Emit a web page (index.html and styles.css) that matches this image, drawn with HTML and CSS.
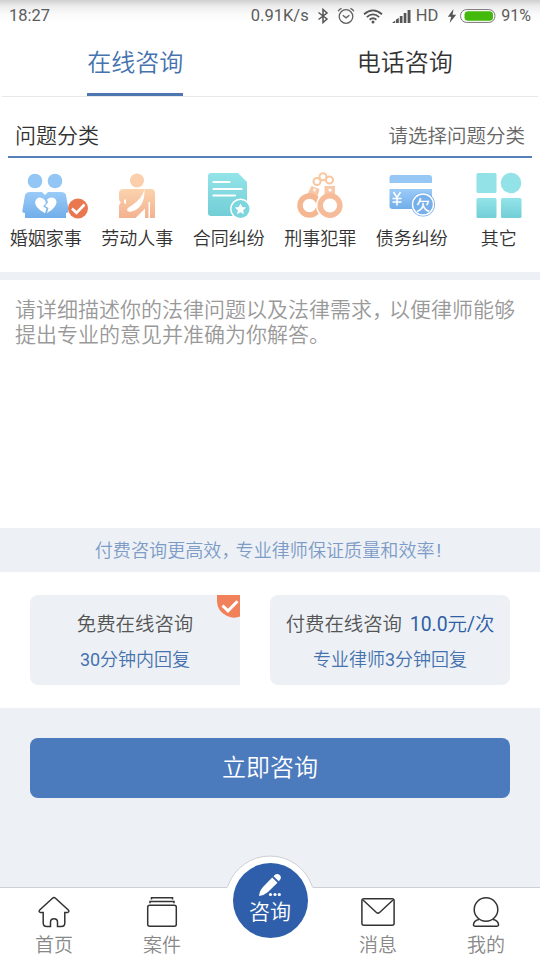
FILE: index.html
```
<!DOCTYPE html>
<html lang="zh-CN">
<head>
<meta charset="utf-8">
<title>在线咨询</title>
<link rel="stylesheet" href="styles.css">
</head>
<body>
<div class="app">
  <header class="status">
    <span class="clock">18:27</span>
    <span class="speed">0.91K/s</span>
    <svg class="bt" width="12" height="16" viewBox="0 0 12 16"><path d="M1.500 4.500 10 11 6 14.500V1.500L10 5 1.500 11.500" fill="none" stroke="#555" stroke-width="1.500"/></svg>
    <svg class="alarm" width="18" height="18" viewBox="0 0 18 18" fill="none" stroke="#606060" stroke-width="1.300"><circle cx="9" cy="9.500" r="6.800"/><path d="M5.800 8.200 9 10.800l3.400-2.600M1.200 4.200Q2.200 2 4.600 1.300M16.800 4.200Q15.800 2 13.400 1.300"/></svg>
    <svg class="wifi" width="20" height="15" viewBox="0 0 20 15" fill="none" stroke="#555" stroke-width="1.800"><path d="M1 5.300Q10-2.500 19 5.300M3.800 8.100Q10 2.700 16.200 8.100M6.600 10.700Q10 7.800 13.400 10.700"/><circle cx="10" cy="13" r="1.500" fill="#555" stroke="none"/></svg>
    <svg class="signal" width="19" height="13" viewBox="0 0 19 13" fill="#555"><path d="M0 13 3.200 10.500V13zM4 9.500 6.800 8v5H4zM7.800 6h2.700v7H7.800zM11.700 3h2.700v10h-2.700zM15.600 0h2.900v13h-2.900z"/></svg>
    <span class="hd">HD</span>
    <svg class="bolt" width="10" height="16" viewBox="0 0 10 16"><path d="M6.500 1 .8 8.700h3.400L2.600 15 9.200 6.700H5.600z" fill="#555"/></svg>
    <svg class="battery" width="36" height="14" viewBox="0 0 36 14"><rect x=".6" y=".6" width="34.300" height="12.800" rx="6" fill="#fff" stroke="#777" stroke-width="1"/><rect x="4.500" y="2.200" width="28.500" height="9.600" rx="3.500" fill="#42b90b"/></svg>
    <span class="percent">91%</span>
  </header>

  <nav class="tabs">
    <div class="tab tab-active"><span>在线咨询</span></div>
    <div class="tab"><span>电话咨询</span></div>
  </nav>

  <section class="category-head">
    <h2>问题分类</h2>
    <span class="choose">请选择问题分类</span>
  </section>

  <section class="categories">
    <div class="category">
      <svg width="86" height="48" viewBox="-3 0 86 48">
        <defs>
          <linearGradient id="blue" x1="0" y1="0" x2="0" y2="1"><stop offset="0" stop-color="#9bcbf7"/><stop offset="1" stop-color="#71aeea"/></linearGradient>
          <linearGradient id="orange" x1="0" y1="0" x2="0" y2="1"><stop offset="0" stop-color="#fbd3ad"/><stop offset="1" stop-color="#f4b190"/></linearGradient>
          <linearGradient id="teal" x1="0" y1="0" x2="0" y2="1"><stop offset="0" stop-color="#93e4e8"/><stop offset="1" stop-color="#72ced6"/></linearGradient>
        </defs>
        <g fill="#93c6f5"><circle cx="29" cy="9" r="7.300"/><circle cx="49" cy="9" r="7.300"/></g>
        <path d="M24 20h12l3 3 3-3h13q4 0 5 3l2.500 15q.3 3-2.500 3v5H19v-5q-3.500 0-2.500-3L19 23q1-3 5-3z" fill="url(#blue)"/>
        <path d="M39 28.200q-4-4.200-8-1.700-3.500 3-.5 8 3 4.200 8.500 6.700l1.500-4.700-3.500-2.200 3-3zM41 27.500q3.800-3.500 7.500-1.200 4 3.500.2 8.500-3 4.200-7.700 6.200l1.500-5-3.500-2 3-3.500z" fill="#fff"/>
        <circle cx="72" cy="36.500" r="10" fill="#e97750"/><path d="m66 36.500 4.500 4.300 8-8.300" fill="none" stroke="#fff" stroke-width="2.600"/>
      </svg>
      <span>婚姻家事</span>
    </div>
    <div class="category">
      <svg width="80" height="48" viewBox="0 0 80 48"><circle cx="40" cy="8.500" r="7" fill="#fbcfab"/><path d="M27 17h27q4 0 4 4v25H22V34q0-2 2-3.500-2-1.500-2-4V21q0-4 5-4z" fill="url(#orange)"/><path d="M47.500 17Q46 26 34 34q-4 2-4 4 .5 2.500 4.500 1.500Q48 36 47.500 17zM38.500 46l9.500-9.500V46zM27 27.500h2v5l-2-2zM51.500 30H53v16h-1.500z" fill="#fff"/></svg>
      <span>劳动人事</span>
    </div>
    <div class="category">
      <svg width="80" height="48" viewBox="0 0 80 48"><path d="M22 1h27l9 9v34H22q-3 0-3-3V4q0-3 3-3z" fill="url(#teal)"/><path d="M24.500 10h16M24.500 17h28M24.500 23.500H46" stroke="#fff" stroke-width="2.200" stroke-linecap="round"/><circle cx="51.500" cy="37" r="10.500" fill="#fff"/><circle cx="51.500" cy="37" r="9" fill="#7dd6dd"/><path d="m51.500 31.500 1.700 3.600 3.900.5-2.900 2.700.7 3.900-3.400-1.900-3.400 1.900.7-3.900-2.900-2.700 3.900-.5z" fill="#fff"/></svg>
      <span>合同纠纷</span>
    </div>
    <div class="category">
      <svg width="80" height="48" viewBox="0 0 80 48"><g fill="none" stroke="#f8c7a0" stroke-width="2"><circle cx="37" cy="9.500" r="3.500"/><circle cx="43" cy="4.800" r="3.500"/><circle cx="49.500" cy="8" r="3.500"/></g><path d="m31.500 14 8 3-2 8-10-3z" fill="#f8c7a5"/><circle cx="29.500" cy="33.500" r="9.500" fill="none" stroke="#f5b692" stroke-width="5.500"/><circle cx="50" cy="33.500" r="14" fill="#fff"/><path d="M44.500 14h10.500v9H44.500z" fill="#f8c9a9"/><circle cx="50" cy="33.500" r="9.800" fill="#fff" stroke="#f6bb98" stroke-width="5.500"/><circle cx="34.500" cy="18" r="1.400" fill="#fff"/><circle cx="50" cy="18" r="1.600" fill="#fff"/></svg>
      <span>刑事犯罪</span>
    </div>
    <div class="category">
      <svg width="80" height="48" viewBox="0 0 80 48"><path d="M20 3h37q3 0 3 3v5H17.500V6q0-3 2.500-3z" fill="#96c7f5"/><path d="M17.500 17H60v20H20.500q-3 0-3-3z" fill="url(#blue)"/><path d="m21.500 20 3.500 5.500 3.500-5.500M20.500 26.500h9M20.500 30h9M25 25.500v8" stroke="#fff" stroke-width="1.600" fill="none"/><circle cx="51" cy="32.500" r="12" fill="#76afe9"/><circle cx="51" cy="32.500" r="10.500" fill="none" stroke="#fff" stroke-width="1.400"/><text x="51" y="37.500" text-anchor="middle" class="owe">欠</text></svg>
      <span>债务纠纷</span>
    </div>
    <div class="category">
      <svg width="80" height="48" viewBox="0 0 80 48"><g fill="url(#teal)"><rect x="17.500" y="1" width="20" height="20" rx="1.500" fill="#92e2e7"/><circle cx="52" cy="11" r="10.300" fill="#92e2e7"/><rect x="17.500" y="26" width="20" height="20" rx="1.500"/><rect x="42" y="26" width="20.500" height="20" rx="1.500"/></g></svg>
      <span>其它</span>
    </div>
  </section>

  <section class="question">请详细描述你的法律问题以及法律需求<i class="comma">，</i>以便律师能够<br>提出专业的意见并准确为你解答。</section>

  <p class="notice">付费咨询更高效<i class="comma">，</i>专业律师保证质量和效率<i class="bang">!</i></p>

  <section class="plans">
    <div class="plan plan-selected">
      <p class="plan-name">免费在线咨询</p>
      <p class="plan-time"><span class="num">30</span>分钟内回复</p>
      <svg class="plan-check" width="23" height="23" viewBox="0 0 23 23"><path d="M0 0h23v21.500Q17 24 10 21 0 16 0 6z" fill="#f0815a"/><path d="m5.500 10.500 5.500 5.300 9.500-9.500" fill="none" stroke="#fff" stroke-width="3"/></svg>
    </div>
    <div class="plan">
      <p class="plan-name">付费在线咨询 <b><span class="num">10.0</span>元<span class="num">/</span>次</b></p>
      <p class="plan-time">专业律师<span class="num">3</span>分钟回复</p>
    </div>
  </section>

  <section class="action"><button class="submit">立即咨询</button></section>

  <nav class="bottom">
    <div class="item">
      <svg width="34" height="34" viewBox="0 0 34 34"><path d="M15.500 3.200q1.500-1.400 3 0L31.300 15q1.500 2-.8 2.500h-2.700V28q0 3.500-3.500 3.500h-3.800V27q0-3.300-3.500-3.300T13.500 27v4.500H9.700Q6.200 31.500 6.200 28V17.500H3.500q-2.300-.5-.8-2.500z"/></svg>
      <span>首页</span>
    </div>
    <div class="item">
      <svg width="34" height="34" viewBox="0 0 34 34"><rect x="2.700" y="10.200" width="28.600" height="21" rx="2"/><path d="M5 8.200V6.500h24v1.700M6.500 4.500V2.700h21v1.800"/></svg>
      <span>案件</span>
    </div>
    <div class="item item-main">
      <svg class="bump" width="96" height="34" viewBox="0 0 96 34"><path d="M3.500 34q2-1 2.800-4A44.500 44.500 0 0 1 89.700 30q.8 3 2.800 4z" fill="#fff"/><path d="M4.500 32.800q1.200-.8 1.800-2.800A44.500 44.500 0 0 1 89.700 30q.6 2 1.800 2.800" fill="none" stroke="#ccd0d3" stroke-width="1"/></svg>
      <div class="disc">
        <svg width="24" height="24" viewBox="0 0 24 24" fill="#fff"><path d="M1 23q.5-5.500 4-9L14.200 4.500l5.300 5.300L10 19q-4 3.500-9 4zM15.500 3.300l1.200-1.200Q19-.2 21.700 2q2.300 2.500.2 4.900l-1.200 1.300z"/><circle cx="12.500" cy="21.500" r="1.600"/><circle cx="17" cy="21.500" r="1.600"/><circle cx="21.300" cy="21.500" r="1.600"/></svg>
        <span>咨询</span>
      </div>
    </div>
    <div class="item">
      <svg width="34" height="34" viewBox="0 0 34 34"><rect x=".9" y="3.700" width="32.200" height="26.600" rx="2"/><path d="m2 5 13.700 12.700q1.300 1 2.600 0L32 5"/></svg>
      <span>消息</span>
    </div>
    <div class="item">
      <svg width="34" height="34" viewBox="0 0 34 34"><circle cx="17" cy="14.500" r="11.800"/><path d="M10 24.500q-5 1-5.500 4.800-.2 2 1.800 2h21.400q2 0 1.800-2Q29 25.500 24 24.500"/></svg>
      <span>我的</span>
    </div>
  </nav>
</div>
</body>
</html>
```
FILE: styles.css
```
* { box-sizing: border-box; margin: 0; padding: 0; }
body {
  width: 540px; height: 960px; overflow: hidden; background: #fff; color: #333;
  font-family: Roboto, "Noto Sans CJK SC", sans-serif; font-weight: 350;
}
i, b { font-style: normal; font-weight: inherit; }
svg { display: block; flex: none; }
.num { font-weight: 400; }
.app { display: flex; flex-direction: column; height: 960px; }
.app > * { flex-shrink: 0; }

.status {
  display: flex; align-items: center; height: 32px; padding: 0 9px;
  background: linear-gradient(#cfcfcf 0, #ececec 6px, #fafafa 14px, #fff 22px);
  color: #5c5c5c; font-size: 16.500px; font-weight: 400; line-height: 32px; white-space: nowrap;
}
.speed { margin-left: auto; }
.bt { margin-left: 8px; }
.alarm { margin-left: 8px; }
.wifi { margin-left: 8px; }
.signal { margin-left: 9px; }
.hd { margin-left: 5px; }
.bolt { margin-left: 9px; }
.battery { margin-left: 3px; }
.percent { margin-left: 5px; font-size: 16px; }

.tabs { display: flex; height: 65px; margin: 0 2px; border-bottom: 1px solid #e8e8e8; }
.tab { flex: 1; display: flex; justify-content: center; font-size: 24px; line-height: 62px; }
.tab span { height: 64px; }
.tab-active { color: #4672ae; padding-right: 3px; }
.tab-active span { border-bottom: 3px solid #4e76b0; }

.category-head {
  display: flex; justify-content: space-between; align-items: center;
  height: 61px; margin: 0 8px; padding: 15px 7px 0; border-bottom: 2px solid #5580b9;
}
.category-head h2 { font-size: 21px; font-weight: inherit; }
.choose { font-size: 19.500px; color: #666; }

.categories { display: flex; height: 114px; padding-top: 14px; }
.category { width: 91.500px; display: flex; flex-direction: column; align-items: center; font-size: 18px; line-height: 30px; }
.category:last-child { flex: 1; }
.category span { margin-top: 4px; }
.owe { font-size: 14px; font-weight: 500; fill: #fff; }

.question { height: 256px; border-top: 8px solid #edf1f5; padding: 18px 15px; font-size: 21px; line-height: 25px; color: #999; white-space: nowrap; }
.comma { letter-spacing: -4px; }
.notice { height: 44px; background: #edf1f5; color: #7d9bc7; text-align: center; font-size: 18.100px; line-height: 46px; padding-right: 4px; }
.bang { margin-left: 2px; font-weight: 400; }

.plans { display: flex; gap: 30px; height: 136px; padding: 23px 30px; }
.plan { position: relative; flex: 1; height: 90px; border-radius: 8px; background: #edf1f5; text-align: center; padding-top: 12px; }
.plan-selected { flex: 0 0 210px; border-radius: 8px 0 0 8px; }
.plan-name { font-size: 19.400px; line-height: 36px; color: #555; }
.plan-name b { color: #2f5fa5; margin-left: 3px; }
.plan-time { font-size: 18px; line-height: 34px; color: #4672ae; }
.plan-check { position: absolute; top: 0; right: 0; }

.action { height: 179px; background: #edf1f5; padding: 30px; }
.submit { display: block; width: 100%; height: 60px; border: 0; border-radius: 8px; background: #4b7abd; color: #fff; font: inherit; font-size: 24px; line-height: 60px; }

.bottom { display: flex; height: 73px; border-top: 1px solid #ced1d4; }
.item { position: relative; flex: 1; display: flex; flex-direction: column; align-items: center; padding-top: 7px; font-size: 19px; line-height: 28px; color: #888; }
.item > svg:not(.bump) { fill: none; stroke: #333; stroke-width: 1.500; }
.item span { margin-top: 3px; }
.item-main { padding: 0; }
.bump { position: absolute; bottom: 100%; margin-bottom: -1px; }
.disc {
  position: absolute; top: -25px; width: 75px; height: 75px; border-radius: 50%;
  background: #2f5faa; color: #fff; font-size: 21px; line-height: 26px;
  display: flex; flex-direction: column; align-items: center; padding-top: 10px;
}
.item .disc span { margin-top: 2px; }
```
